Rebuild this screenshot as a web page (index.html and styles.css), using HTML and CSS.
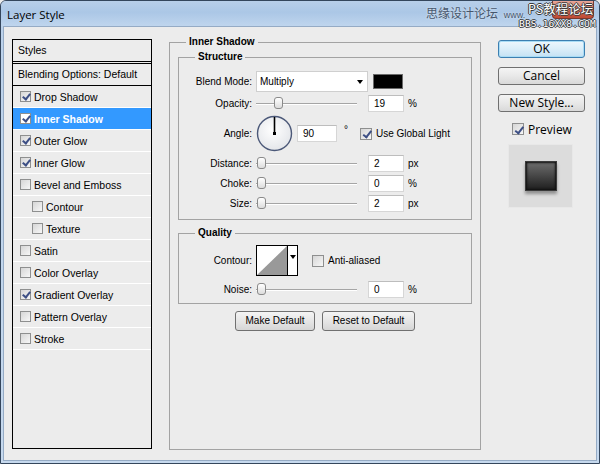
FILE: index.html
```html
<!DOCTYPE html>
<html>
<head>
<meta charset="utf-8">
<link rel="stylesheet" href="styles.css">
</head>
<body>
<div class="window">
  <div class="titlebar">
    <span class="title">Layer Style</span>
    <span class="close"></span>
    <span class="wm">思缘设计论坛 <small>www.</small></span>
    <span class="stamp">PS教程论坛</span>
    <span class="stamp2">BBS.16XX8.COM</span>
  </div>
  <div class="content">
    <div class="list">
      <div class="lh">Styles</div>
      <div class="lb">Blending Options: Default</div>
      <div class="li"><span class="cb on"></span>Drop Shadow</div>
      <div class="li sel"><span class="cb on"></span>Inner Shadow</div>
      <div class="li"><span class="cb on"></span>Outer Glow</div>
      <div class="li"><span class="cb on"></span>Inner Glow</div>
      <div class="li"><span class="cb"></span>Bevel and Emboss</div>
      <div class="li sub"><span class="cb"></span>Contour</div>
      <div class="li sub"><span class="cb"></span>Texture</div>
      <div class="li"><span class="cb"></span>Satin</div>
      <div class="li"><span class="cb"></span>Color Overlay</div>
      <div class="li"><span class="cb on"></span>Gradient Overlay</div>
      <div class="li"><span class="cb"></span>Pattern Overlay</div>
      <div class="li"><span class="cb"></span>Stroke</div>
    </div>

    <fieldset class="grp outer">
      <legend>Inner Shadow</legend>
      <fieldset class="grp structure">
        <legend>Structure</legend>
        <div class="row h21">
          <span class="lbl">Blend Mode:</span>
          <div class="select"><span>Multiply</span><span class="arrow"></span></div>
          <span class="swatch"></span>
        </div>
        <div class="row h17 gap3">
          <span class="lbl">Opacity:</span>
          <div class="slider"><span class="thumb" style="left:18px"></span></div>
          <span class="num">19</span><span class="unit">%</span>
        </div>
        <div class="row h37 gap3">
          <span class="lbl">Angle:</span>
          <svg class="dial" width="37" height="37" viewBox="0 0 37 37">
            <defs>
              <radialGradient id="dg" cx="0.45" cy="0.4" r="0.6">
                <stop offset="0" stop-color="#ffffff"/>
                <stop offset="1" stop-color="#e4e6ea"/>
              </radialGradient>
            </defs>
            <circle cx="18.5" cy="18.5" r="17" fill="url(#dg)" stroke="#4b5878" stroke-width="1.4"/>
            <line x1="18.5" y1="2" x2="18.5" y2="18.5" stroke="#000" stroke-width="1.6"/>
            <rect x="17" y="17" width="3" height="3" fill="#000"/>
          </svg>
          <span class="num ang">90</span>
          <span class="deg">°</span>
          <span class="chk gl"><span class="cb big on"></span>Use Global Light</span>
        </div>
        <div class="row h17 gap3">
          <span class="lbl">Distance:</span>
          <div class="slider"><span class="thumb" style="left:1px"></span></div>
          <span class="num">2</span><span class="unit">px</span>
        </div>
        <div class="row h17 gap3">
          <span class="lbl">Choke:</span>
          <div class="slider"><span class="thumb" style="left:1px"></span></div>
          <span class="num">0</span><span class="unit">%</span>
        </div>
        <div class="row h17 gap3">
          <span class="lbl">Size:</span>
          <div class="slider"><span class="thumb" style="left:1px"></span></div>
          <span class="num">2</span><span class="unit">px</span>
        </div>
      </fieldset>

      <fieldset class="grp quality">
        <legend>Quality</legend>
        <div class="row h31">
          <span class="lbl">Contour:</span>
          <div class="contour">
            <svg width="30" height="29" viewBox="0 0 30 29">
              <rect x="0" y="0" width="30" height="29" fill="#fff"/>
              <polygon points="0,29 30,0 30,29" fill="#999"/>
            </svg>
            <span class="carrow"></span>
          </div>
          <span class="chk aa"><span class="cb big"></span>Anti-aliased</span>
        </div>
        <div class="row h17 gap5">
          <span class="lbl">Noise:</span>
          <div class="slider"><span class="thumb" style="left:1px"></span></div>
          <span class="num">0</span><span class="unit">%</span>
        </div>
      </fieldset>

      <div class="btnrow">
        <span class="btn">Make Default</span>
        <span class="btn">Reset to Default</span>
      </div>
    </fieldset>

    <div class="side">
      <span class="sbtn ok">OK</span>
      <span class="sbtn">Cancel</span>
      <span class="sbtn">New Style...</span>
      <span class="chk prev"><span class="cb big on"></span>Preview</span>
      <div class="preview"><span class="psq"></span></div>
    </div>
  </div>
</div>
</body>
</html>
```

FILE: styles.css
```css
html, body {
  margin: 0;
  padding: 0;
}
body {
  width: 600px;
  height: 464px;
  overflow: hidden;
  font-family: "Liberation Sans", Arial, sans-serif;
  font-size: 10px;
  color: #000;
  background: #ececec;
}
.window {
  width: 600px;
  height: 464px;
  box-sizing: border-box;
  border: 1px solid #34465c;
  border-radius: 6px 6px 0 0;
  background: linear-gradient(#bcd2eb, #c6d9ee);
  display: flex;
  flex-direction: column;
}
.titlebar {
  position: relative;
  height: 25px;
  flex: none;
  display: flex;
  align-items: center;
  padding-left: 6px;
  background: linear-gradient(#b8cfe9 0%, #abc7e6 45%, #bfd5ed 100%);
  border-radius: 5px 5px 0 0;
}
.title {
  font-family: "Open Sans", "Liberation Sans", sans-serif;
  font-size: 11.5px;
  color: #000;
  margin-top: 2px;
}
.close {
  position: absolute;
  right: 5px;
  top: 0;
  width: 42px;
  height: 18px;
  box-sizing: border-box;
  border: 1px solid #7a3a30;
  border-top: none;
  border-radius: 0 0 4px 4px;
  background: linear-gradient(#e9a99b, #cf6a55 50%, #c04a34);
}
.wm {
  position: absolute;
  left: 425px;
  top: 6px;
  font-family: "Noto Sans CJK SC", sans-serif;
  font-size: 12px;
  line-height: 12px;
  color: #46566c;
  text-shadow: 0 0 2px #e8f0f8;
}
.wm small {
  font-family: "Liberation Sans", sans-serif;
  font-size: 9px;
  margin-left: 3px;
}
.stamp {
  position: absolute;
  left: 527px;
  top: 2px;
  font-family: "Noto Sans CJK SC", sans-serif;
  font-size: 12.5px;
  line-height: 12px;
  color: #fff;
  text-shadow: -1px 0 #3a3a3a, 1px 0 #3a3a3a, 0 -1px #3a3a3a, 0 1px #3a3a3a;
}
.stamp2 {
  position: absolute;
  left: 518px;
  top: 18px;
  font-family: "DejaVu Sans Mono", monospace;
  font-size: 9.5px;
  line-height: 9px;
  letter-spacing: 0.2px;
  color: #fff;
  text-shadow: -1px 0 #3a3a3a, 1px 0 #3a3a3a, 0 -1px #3a3a3a, 0 1px #3a3a3a;
  z-index: 1;
}
.content {
  flex: 1;
  margin: 0 2px 2px;
  border: 1px solid #95abc5;
  background: #ececec;
  display: flex;
  align-items: flex-start;
  padding: 8px 0 0 8px;
}

/* Styles list */
.list {
  width: 140px;
  height: 410px;
  box-sizing: border-box;
  margin-top: 4px;
  border: 1px solid #000;
  font-size: 10.5px;
}
.lh {
  height: 21px;
  line-height: 21px;
  padding-left: 5px;
  border-bottom: 3px double #000;
}
.lb {
  height: 21px;
  line-height: 21px;
  padding-left: 5px;
  border-bottom: 1px solid #000;
}
.li {
  height: 21px;
  display: flex;
  align-items: center;
  padding-left: 7px;
  border-bottom: 1px solid #fff;
}
.li.sub {
  padding-left: 19px;
}
.li .cb {
  margin-right: 3px;
}
.li.sel {
  background: #3399ff;
  color: #fff;
  font-weight: bold;
}
.li.sel .cb {
  background: #fff;
}

.cb {
  position: relative;
  display: inline-block;
  flex: none;
  width: 11px;
  height: 11px;
  box-sizing: border-box;
  border: 1px solid #8e8f8f;
  background: linear-gradient(135deg, #d6d6d6, #f7f7f7);
}
.cb.big {
  width: 12px;
  height: 12px;
}
.cb.on::after {
  content: "";
  position: absolute;
  left: 3px;
  top: 0;
  width: 3px;
  height: 6px;
  border: solid #3d4f85;
  border-width: 0 2px 2px 0;
  transform: rotate(38deg);
}
.cb.big.on::after {
  left: 3.5px;
  top: 0.5px;
  height: 6.5px;
}

/* Group boxes */
.grp {
  margin: 0;
  min-width: 0;
  border: 1px solid #a3a3a3;
}
.grp legend {
  font-weight: bold;
  font-size: 10px;
  line-height: 14px;
  padding: 0 3px;
}
.outer {
  width: 312px;
  height: 415px;
  box-sizing: border-box;
  margin-left: 17px;
  padding: 1px 8px 0;
}
.outer > legend {
  margin-left: 8px;
}
.structure {
  padding: 7px 0 7px;
}
.structure > legend, .quality > legend {
  margin-left: 16px;
}
.quality {
  margin-top: 6px;
  padding: 5px 0 5px;
}
.row {
  display: flex;
  align-items: center;
}
.h21 { height: 21px; }
.h17 { height: 17px; }
.h37 { height: 37px; }
.h31 { height: 31px; }
.gap3 { margin-top: 3px; }
.gap5 { margin-top: 5px; }
.lbl {
  width: 73px;
  margin-right: 4px;
  text-align: right;
  flex: none;
}
.select {
  width: 112px;
  height: 21px;
  box-sizing: border-box;
  background: #fff;
  border: 1px solid #cfcfcf;
  display: flex;
  align-items: center;
  justify-content: space-between;
  padding: 0 4px 0 3px;
}
.arrow, .carrow {
  width: 0;
  height: 0;
  border-left: 3.5px solid transparent;
  border-right: 3.5px solid transparent;
  border-top: 4px solid #000;
}
.swatch {
  width: 30px;
  height: 15px;
  box-sizing: border-box;
  margin-left: 5px;
  background: #000;
  border: 1px solid #6a6a6a;
}
.slider {
  position: relative;
  width: 101px;
  height: 17px;
  margin-right: 11px;
  flex: none;
}
.slider::before {
  content: "";
  position: absolute;
  left: 0;
  right: 0;
  top: 8px;
  height: 1px;
  background: #a5a5a5;
  box-shadow: 0 1px 0 #ffffff;
}
.thumb {
  position: absolute;
  top: 2px;
  width: 9px;
  height: 12px;
  box-sizing: border-box;
  border: 1px solid #8a8a8a;
  border-radius: 3px;
  background: linear-gradient(#ffffff, #dcdcdc);
}
.num {
  width: 36px;
  height: 17px;
  box-sizing: border-box;
  background: #fff;
  border: 1px solid #d6d6d6;
  border-top-color: #bdbdbd;
  padding-left: 5px;
  line-height: 15px;
  flex: none;
}
.num.ang {
  width: 40px;
  margin-left: 4px;
}
.unit {
  margin-left: 4px;
}
.deg {
  margin-left: 7px;
  align-self: flex-start;
  margin-top: 9px;
}
.chk {
  display: flex;
  align-items: center;
}
.chk .cb {
  margin-right: 4px;
}
.gl {
  margin-left: 12px;
}
.contour {
  width: 42px;
  height: 31px;
  box-sizing: border-box;
  border: 1px solid #000;
  display: flex;
  background: #fff;
}
.contour svg {
  display: block;
  border-right: 1px solid #000;
}
.carrow {
  margin: 9px 0 0 2px;
}
.aa {
  margin-left: 14px;
}
.btnrow {
  margin-top: 7px;
  display: flex;
  justify-content: center;
  gap: 7px;
}
.btn {
  height: 20px;
  box-sizing: border-box;
  border: 1px solid #707070;
  border-radius: 3px;
  background: linear-gradient(#f4f4f4, #e6e6e6 50%, #d6d6d6);
  line-height: 18px;
  text-align: center;
}
.btn:first-child { width: 80px; }
.btn:last-child { width: 93px; }

/* Right column */
.side {
  width: 87px;
  margin-left: 17px;
  margin-top: 5px;
  display: flex;
  flex-direction: column;
  font-family: "Open Sans", "Liberation Sans", sans-serif;
  font-size: 12px;
}
.sbtn {
  height: 18px;
  box-sizing: border-box;
  border: 1px solid #707070;
  border-radius: 3px;
  background: linear-gradient(#f4f4f4, #e8e8e8 50%, #d9d9d9);
  line-height: 16px;
  text-align: center;
  margin-bottom: 9px;
}
.sbtn.ok {
  border-color: #3c7fb1;
  background: linear-gradient(#eef7fd, #dbeef9 50%, #c4e2f4);
  box-shadow: inset 0 0 0 1px #a9dcf5;
}
.prev {
  height: 16px;
  margin-left: 14px;
}
.preview {
  width: 65px;
  height: 64px;
  box-sizing: border-box;
  margin: 7px 0 0 10px;
  background: #dcdcdc;
  border: 1px solid #e8e8e8;
  display: flex;
  align-items: center;
  justify-content: center;
}
.psq {
  width: 32px;
  height: 30px;
  box-sizing: border-box;
  border: 1px solid #3a3a3a;
  background: linear-gradient(#6e6e6e, #4a4a4a 45%, #1e1e1e);
  box-shadow: inset 0 0 2px 1px #111, 0 3px 3px rgba(0,0,0,0.35);
}
```
